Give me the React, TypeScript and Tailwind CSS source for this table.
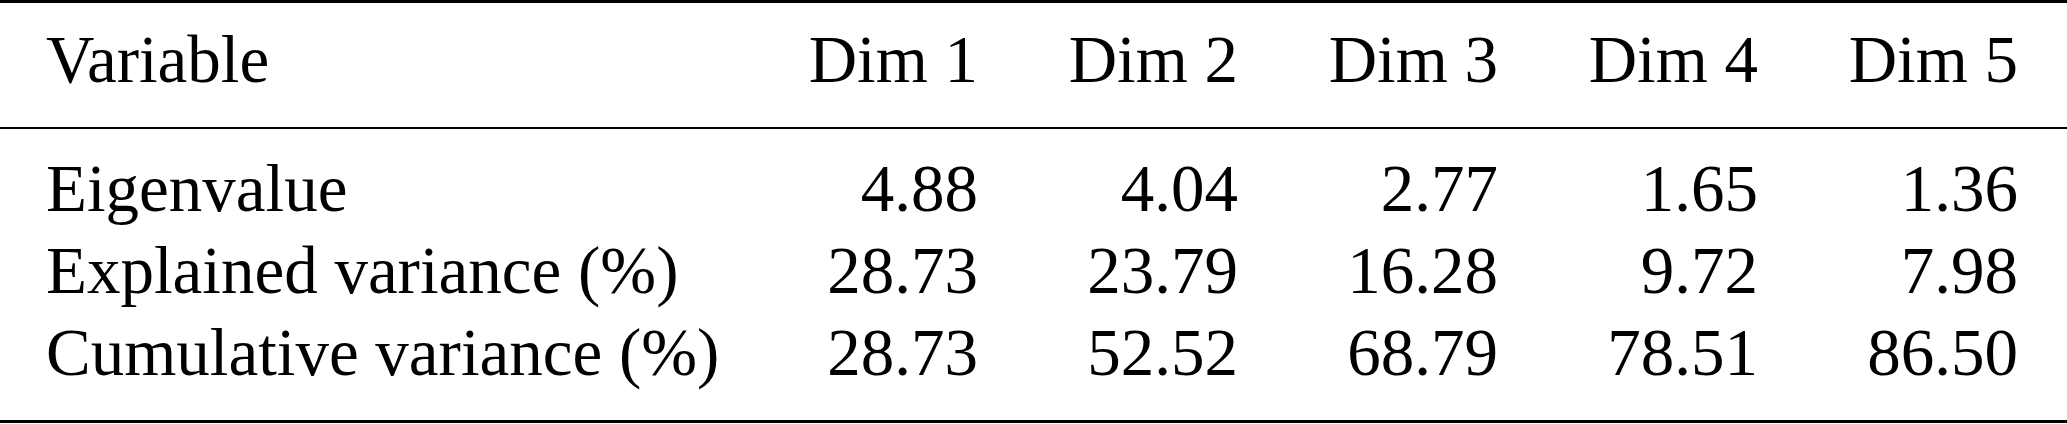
import React from "react";

const rows = [
  { label: "Eigenvalue", values: ["4.88", "4.04", "2.77", "1.65", "1.36"] },
  { label: "Explained variance (%)", values: ["28.73", "23.79", "16.28", "9.72", "7.98"] },
  { label: "Cumulative variance (%)", values: ["28.73", "52.52", "68.79", "78.51", "86.50"] },
];

const dims = ["Dim 1", "Dim 2", "Dim 3", "Dim 4", "Dim 5"];

const grid =
  "grid grid-cols-[minmax(0,1fr)_260px_260px_260px_260px_260px] pl-[46px] pr-[49px] whitespace-nowrap";

export default function App() {
  return (
    <div className="w-[2067px] h-[424px] overflow-hidden bg-white text-black font-['Liberation_Serif','Times_New_Roman',serif] text-[67px] leading-[82px]">
      {/* top rule */}
      <div className="h-[3px] bg-black" />

      {/* header */}
      <div className={`${grid} pt-[15px] pb-[27px]`}>
        <div>Variable</div>
        {dims.map((d) => (
          <div key={d} className="text-right">
            {d}
          </div>
        ))}
      </div>

      {/* mid rule */}
      <div className="h-[2px] bg-black" />

      {/* body */}
      <div className="pt-[18px] pb-[27px]">
        {rows.map((r) => (
          <div key={r.label} className={grid}>
            <div>{r.label}</div>
            {r.values.map((v, i) => (
              <div key={i} className="text-right">
                {v}
              </div>
            ))}
          </div>
        ))}
      </div>

      {/* bottom rule */}
      <div className="h-[3px] bg-black" />
    </div>
  );
}
